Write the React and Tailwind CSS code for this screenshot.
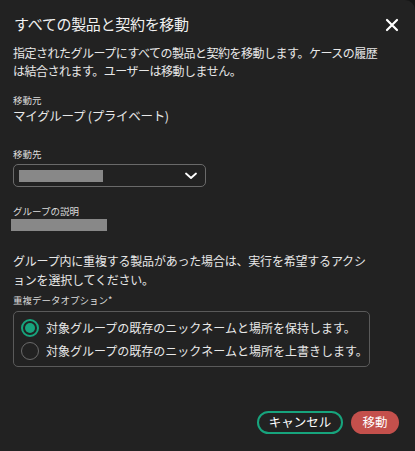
import React from "react";

export default function App() {
  const font = { fontFamily: '"Noto Sans CJK JP", "Noto Sans", sans-serif' };
  return (
    <div className="w-[415px] h-[451px] bg-[#161616]" style={font}>
      <div className="w-full h-full bg-[#222222] rounded-tr-[10px] text-[#e8e8e8] relative flex flex-col">
        <div className="flex items-center justify-between pl-[14px] pr-[16px] pt-[9px] h-[38px]">
          <div className="text-[15px] leading-[24px] text-[#f0f0f0] tracking-[-0.3px]">すべての製品と契約を移動</div>
          <svg width="14" height="14" viewBox="0 0 14 14" className="mt-[2px]">
            <path d="M2 2 L12 12 M12 2 L2 12" stroke="#ffffff" strokeWidth="2.2" strokeLinecap="round" />
          </svg>
        </div>
        <div className="px-[13px] mt-[6px] text-[12px] leading-[18px] tracking-[-0.5px] w-[400px]">
          指定されたグループにすべての製品と契約を移動します。ケースの履歴は結合されます。ユーザーは移動しません。
        </div>
        <div className="px-[13px] mt-[13px]">
          <div className="text-[9.5px] leading-[14px] text-[#dcdcdc]">移動元</div>
          <div className="text-[12.5px] leading-[18px] tracking-[-0.3px]">マイグループ (プライベート)</div>
        </div>
        <div className="px-[13px] mt-[22px]">
          <div className="text-[9.5px] leading-[14px] text-[#dcdcdc]">移動先</div>
          <div className="mt-[3px] w-[193px] h-[23px] border border-[#6a6a6a] rounded-[5px] flex items-center justify-between pl-[5px] pr-[8px]">
            <div className="w-[84px] h-[12px] bg-[#888888]" />
            <svg width="12" height="8" viewBox="0 0 12 8">
              <path d="M1 1.5 L6 6 L11 1.5" stroke="#ffffff" strokeWidth="1.8" fill="none" strokeLinecap="round" strokeLinejoin="round" />
            </svg>
          </div>
        </div>
        <div className="px-[11px] mt-[17px]">
          <div className="text-[9.5px] leading-[14px] text-[#dcdcdc] pl-[2px]">グループの説明</div>
          <div className="mt-[1px] w-[96px] h-[12px] bg-[#888888]" />
        </div>
        <div className="px-[13px] mt-[20px] text-[12px] leading-[19px] tracking-[-0.2px] whitespace-nowrap flex flex-col">
          <span>グループ内に重複する製品があった場合は、実行を希望するアクシ</span>
          <span>ョンを選択してください。</span>
        </div>
        <div className="px-[13px] mt-[4px]">
          <div className="text-[9.5px] leading-[14px] text-[#dcdcdc]">重複データオプション*</div>
          <div className="mt-[4px] w-[357px] border border-[#5a5a5a] rounded-[5px] pl-[7px] py-[4px] flex flex-col">
            <div className="flex items-center h-[23px]">
              <div className="w-[18px] h-[18px] rounded-full border-2 border-[#17a47d] flex items-center justify-center">
                <div className="w-[10px] h-[10px] rounded-full bg-[#17a47d]" />
              </div>
              <span className="ml-[7px] text-[12px] leading-[18px] whitespace-nowrap">対象グループの既存のニックネームと場所を保持します。</span>
            </div>
            <div className="flex items-center h-[23px]">
              <div className="w-[18px] h-[18px] rounded-full border border-[#6a6a6a]" />
              <span className="ml-[7px] text-[12px] leading-[18px] whitespace-nowrap">対象グループの既存のニックネームと場所を上書きします。</span>
            </div>
          </div>
        </div>
        <div className="flex-1" />
        <div className="flex justify-end items-center gap-[8px] pr-[16px] pb-[17px]">
          <button className="h-[23px] w-[86px] rounded-full border-2 border-[#17a47d] text-[12.5px] text-white leading-none flex items-center justify-center">キャンセル</button>
          <button className="h-[23px] w-[48px] rounded-full bg-[#c4504c] text-[12.5px] text-white leading-none flex items-center justify-center">移動</button>
        </div>
      </div>
    </div>
  );
}
